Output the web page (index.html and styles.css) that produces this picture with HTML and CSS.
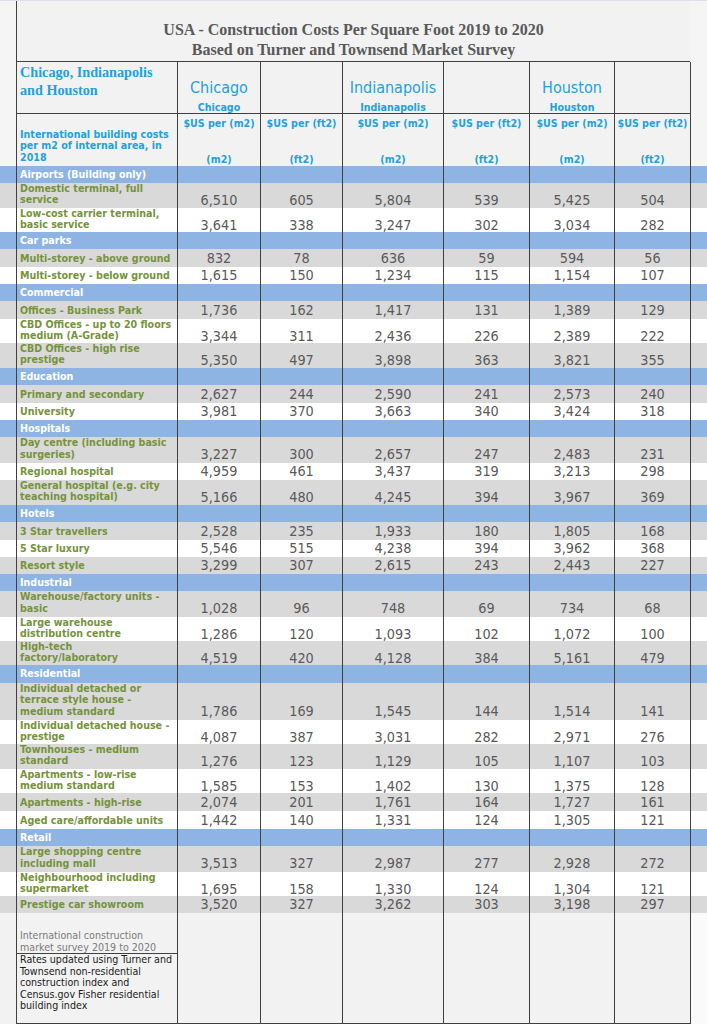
FILE: index.html
```
<!DOCTYPE html>
<html>
<head>
<meta charset="utf-8">
<link rel="stylesheet" href="styles.css">
</head>
<body>
<div class="sheet">
  <div class="title-row">
    <div class="m"></div>
    <div class="title">USA - Construction Costs Per Square Foot 2019 to 2020<br>Based on Turner and Townsend Market Survey</div>
    <div class="m edge"></div>
  </div>

  <div class="row head1">
    <div class="m"></div>
    <div class="c lbl-serif">Chicago, Indianapolis<br>and Houston</div>
    <div class="c city"><span class="big">Chicago</span><span class="small">Chicago</span></div>
    <div class="c"></div>
    <div class="c city"><span class="big">Indianapolis</span><span class="small">Indianapolis</span></div>
    <div class="c"></div>
    <div class="c city"><span class="big">Houston</span><span class="small">Houston</span></div>
    <div class="c"></div>
    <div class="m edge"></div>
  </div>

  <div class="row head2">
    <div class="m"></div>
    <div class="c intro">International building costs<br>per m2 of internal area, in<br>2018</div>
    <div class="c unit"><span>$US per (m2)</span><span>(m2)</span></div>
    <div class="c unit"><span>$US per (ft2)</span><span>(ft2)</span></div>
    <div class="c unit"><span>$US per (m2)</span><span>(m2)</span></div>
    <div class="c unit"><span>$US per (ft2)</span><span>(ft2)</span></div>
    <div class="c unit"><span>$US per (m2)</span><span>(m2)</span></div>
    <div class="c unit"><span>$US per (ft2)</span><span>(ft2)</span></div>
    <div class="m edge"></div>
  </div>

  <div class="row cat h17"><div class="m"></div><div class="c lbl">Airports (Building only)</div><div class="c"></div><div class="c"></div><div class="c"></div><div class="c"></div><div class="c"></div><div class="c"></div><div class="m edge"></div></div>
  <div class="row g h25"><div class="m"></div><div class="c lbl">Domestic terminal, full<br>service</div><div class="c n">6,510</div><div class="c n">605</div><div class="c n">5,804</div><div class="c n">539</div><div class="c n">5,425</div><div class="c n">504</div><div class="m edge"></div></div>
  <div class="row w h24"><div class="m"></div><div class="c lbl">Low-cost carrier terminal,<br>basic service</div><div class="c n">3,641</div><div class="c n">338</div><div class="c n">3,247</div><div class="c n">302</div><div class="c n">3,034</div><div class="c n">282</div><div class="m edge"></div></div>

  <div class="row cat h17"><div class="m"></div><div class="c lbl">Car parks</div><div class="c"></div><div class="c"></div><div class="c"></div><div class="c"></div><div class="c"></div><div class="c"></div><div class="m edge"></div></div>
  <div class="row g h18"><div class="m"></div><div class="c lbl">Multi-storey - above ground</div><div class="c n">832</div><div class="c n">78</div><div class="c n">636</div><div class="c n">59</div><div class="c n">594</div><div class="c n">56</div><div class="m edge"></div></div>
  <div class="row w h17"><div class="m"></div><div class="c lbl">Multi-storey - below ground</div><div class="c n">1,615</div><div class="c n">150</div><div class="c n">1,234</div><div class="c n">115</div><div class="c n">1,154</div><div class="c n">107</div><div class="m edge"></div></div>

  <div class="row cat h17"><div class="m"></div><div class="c lbl">Commercial</div><div class="c"></div><div class="c"></div><div class="c"></div><div class="c"></div><div class="c"></div><div class="c"></div><div class="m edge"></div></div>
  <div class="row g h18"><div class="m"></div><div class="c lbl">Offices - Business Park</div><div class="c n">1,736</div><div class="c n">162</div><div class="c n">1,417</div><div class="c n">131</div><div class="c n">1,389</div><div class="c n">129</div><div class="m edge"></div></div>
  <div class="row w h24"><div class="m"></div><div class="c lbl">CBD Offices - up to 20 floors<br>medium (A-Grade)</div><div class="c n">3,344</div><div class="c n">311</div><div class="c n">2,436</div><div class="c n">226</div><div class="c n">2,389</div><div class="c n">222</div><div class="m edge"></div></div>
  <div class="row g h25"><div class="m"></div><div class="c lbl">CBD Offices - high rise<br>prestige</div><div class="c n">5,350</div><div class="c n">497</div><div class="c n">3,898</div><div class="c n">363</div><div class="c n">3,821</div><div class="c n">355</div><div class="m edge"></div></div>

  <div class="row cat h17"><div class="m"></div><div class="c lbl">Education</div><div class="c"></div><div class="c"></div><div class="c"></div><div class="c"></div><div class="c"></div><div class="c"></div><div class="m edge"></div></div>
  <div class="row g h18"><div class="m"></div><div class="c lbl">Primary and secondary</div><div class="c n">2,627</div><div class="c n">244</div><div class="c n">2,590</div><div class="c n">241</div><div class="c n">2,573</div><div class="c n">240</div><div class="m edge"></div></div>
  <div class="row w h17"><div class="m"></div><div class="c lbl">University</div><div class="c n">3,981</div><div class="c n">370</div><div class="c n">3,663</div><div class="c n">340</div><div class="c n">3,424</div><div class="c n">318</div><div class="m edge"></div></div>

  <div class="row cat h17"><div class="m"></div><div class="c lbl">Hospitals</div><div class="c"></div><div class="c"></div><div class="c"></div><div class="c"></div><div class="c"></div><div class="c"></div><div class="m edge"></div></div>
  <div class="row g h26"><div class="m"></div><div class="c lbl">Day centre (including basic<br>surgeries)</div><div class="c n">3,227</div><div class="c n">300</div><div class="c n">2,657</div><div class="c n">247</div><div class="c n">2,483</div><div class="c n">231</div><div class="m edge"></div></div>
  <div class="row w h17"><div class="m"></div><div class="c lbl">Regional hospital</div><div class="c n">4,959</div><div class="c n">461</div><div class="c n">3,437</div><div class="c n">319</div><div class="c n">3,213</div><div class="c n">298</div><div class="m edge"></div></div>
  <div class="row g h25"><div class="m"></div><div class="c lbl">General hospital (e.g. city<br>teaching hospital)</div><div class="c n">5,166</div><div class="c n">480</div><div class="c n">4,245</div><div class="c n">394</div><div class="c n">3,967</div><div class="c n">369</div><div class="m edge"></div></div>

  <div class="row cat h17"><div class="m"></div><div class="c lbl">Hotels</div><div class="c"></div><div class="c"></div><div class="c"></div><div class="c"></div><div class="c"></div><div class="c"></div><div class="m edge"></div></div>
  <div class="row g h18"><div class="m"></div><div class="c lbl">3 Star travellers</div><div class="c n">2,528</div><div class="c n">235</div><div class="c n">1,933</div><div class="c n">180</div><div class="c n">1,805</div><div class="c n">168</div><div class="m edge"></div></div>
  <div class="row w h17"><div class="m"></div><div class="c lbl">5 Star luxury</div><div class="c n">5,546</div><div class="c n">515</div><div class="c n">4,238</div><div class="c n">394</div><div class="c n">3,962</div><div class="c n">368</div><div class="m edge"></div></div>
  <div class="row g h17"><div class="m"></div><div class="c lbl">Resort style</div><div class="c n">3,299</div><div class="c n">307</div><div class="c n">2,615</div><div class="c n">243</div><div class="c n">2,443</div><div class="c n">227</div><div class="m edge"></div></div>

  <div class="row cat h17"><div class="m"></div><div class="c lbl">Industrial</div><div class="c"></div><div class="c"></div><div class="c"></div><div class="c"></div><div class="c"></div><div class="c"></div><div class="m edge"></div></div>
  <div class="row g h26"><div class="m"></div><div class="c lbl">Warehouse/factory units -<br>basic</div><div class="c n">1,028</div><div class="c n">96</div><div class="c n">748</div><div class="c n">69</div><div class="c n">734</div><div class="c n">68</div><div class="m edge"></div></div>
  <div class="row w h24"><div class="m"></div><div class="c lbl">Large warehouse<br>distribution centre</div><div class="c n">1,286</div><div class="c n">120</div><div class="c n">1,093</div><div class="c n">102</div><div class="c n">1,072</div><div class="c n">100</div><div class="m edge"></div></div>
  <div class="row g h24"><div class="m"></div><div class="c lbl">High-tech<br>factory/laboratory</div><div class="c n">4,519</div><div class="c n">420</div><div class="c n">4,128</div><div class="c n">384</div><div class="c n">5,161</div><div class="c n">479</div><div class="m edge"></div></div>

  <div class="row cat h18"><div class="m"></div><div class="c lbl">Residential</div><div class="c"></div><div class="c"></div><div class="c"></div><div class="c"></div><div class="c"></div><div class="c"></div><div class="m edge"></div></div>
  <div class="row g h37"><div class="m"></div><div class="c lbl">Individual detached or<br>terrace style house -<br>medium standard</div><div class="c n">1,786</div><div class="c n">169</div><div class="c n">1,545</div><div class="c n">144</div><div class="c n">1,514</div><div class="c n">141</div><div class="m edge"></div></div>
  <div class="row w h24"><div class="m"></div><div class="c lbl">Individual detached house -<br>prestige</div><div class="c n">4,087</div><div class="c n">387</div><div class="c n">3,031</div><div class="c n">282</div><div class="c n">2,971</div><div class="c n">276</div><div class="m edge"></div></div>
  <div class="row g h25"><div class="m"></div><div class="c lbl">Townhouses - medium<br>standard</div><div class="c n">1,276</div><div class="c n">123</div><div class="c n">1,129</div><div class="c n">105</div><div class="c n">1,107</div><div class="c n">103</div><div class="m edge"></div></div>
  <div class="row w h24"><div class="m"></div><div class="c lbl">Apartments - low-rise<br>medium standard</div><div class="c n">1,585</div><div class="c n">153</div><div class="c n">1,402</div><div class="c n">130</div><div class="c n">1,375</div><div class="c n">128</div><div class="m edge"></div></div>
  <div class="row g h18"><div class="m"></div><div class="c lbl">Apartments - high-rise</div><div class="c n">2,074</div><div class="c n">201</div><div class="c n">1,761</div><div class="c n">164</div><div class="c n">1,727</div><div class="c n">161</div><div class="m edge"></div></div>
  <div class="row w h18"><div class="m"></div><div class="c lbl">Aged care/affordable units</div><div class="c n">1,442</div><div class="c n">140</div><div class="c n">1,331</div><div class="c n">124</div><div class="c n">1,305</div><div class="c n">121</div><div class="m edge"></div></div>

  <div class="row cat h17"><div class="m"></div><div class="c lbl">Retail</div><div class="c"></div><div class="c"></div><div class="c"></div><div class="c"></div><div class="c"></div><div class="c"></div><div class="m edge"></div></div>
  <div class="row g h26"><div class="m"></div><div class="c lbl">Large shopping centre<br>including mall</div><div class="c n">3,513</div><div class="c n">327</div><div class="c n">2,987</div><div class="c n">277</div><div class="c n">2,928</div><div class="c n">272</div><div class="m edge"></div></div>
  <div class="row w h24"><div class="m"></div><div class="c lbl">Neighbourhood including<br>supermarket</div><div class="c n">1,695</div><div class="c n">158</div><div class="c n">1,330</div><div class="c n">124</div><div class="c n">1,304</div><div class="c n">121</div><div class="m edge"></div></div>
  <div class="row g h17"><div class="m"></div><div class="c lbl">Prestige car showroom</div><div class="c n">3,520</div><div class="c n">327</div><div class="c n">3,262</div><div class="c n">303</div><div class="c n">3,198</div><div class="c n">297</div><div class="m edge"></div></div>

  <div class="row foot">
    <div class="m"></div>
    <div class="c notes">
      <div class="src">International construction<br>market survey 2019 to 2020</div>
      <div class="upd">Rates updated using Turner and<br>Townsend non-residential<br>construction index and<br>Census.gov Fisher residential<br>building index</div>
    </div>
    <div class="c"></div><div class="c"></div><div class="c"></div><div class="c"></div><div class="c"></div><div class="c"></div>
    <div class="m edge foot-edge"></div>
  </div>
</div>
</body>
</html>
```
FILE: styles.css
```
* { box-sizing: border-box; }
html, body { margin: 0; padding: 0; background: #ffffff; }
.sheet {
  width: 707px;
  font-family: "DejaVu Sans Condensed", "DejaVu Sans", sans-serif;
  font-stretch: condensed;
  border-top: 1px solid #dde2ea;
}
.title-row {
  display: grid;
  grid-template-columns: 16px 674px 17px;
  height: 61px;
  background: #f2f2f2;
}
.title {
  border-left: 1px solid #404040;
  border-bottom: 1px solid #404040;
  padding-top: 19px;
  text-align: center;
  font-family: "Liberation Serif", "DejaVu Serif", serif;
  font-weight: bold;
  font-size: 16px;
  line-height: 20px;
  color: #595959;
}
.m { background: transparent; }
.edge { border-left: 1px solid #404040; }
.title-row .m { background: #f5f5f5; }
.title-row .edge { border-left: none; }

.row {
  display: grid;
  grid-template-columns: 16px 161px 83px 82px 101px 86px 85px 76px 17px;
}
.row > .c { border-left: 1px solid #404040; }

.head1, .head2 { background: #f2f2f2; }
.head1 > .m, .head2 > .m { background: #f5f5f5; }
.head1 { height: 52px; }
.head1 > .c { border-bottom: 1px solid #404040; }
.head2 { height: 52px; }

.lbl-serif {
  font-family: "Liberation Serif", "DejaVu Serif", serif;
  font-weight: bold;
  font-size: 14.2px;
  line-height: 18px;
  color: #1ea1dc;
  padding: 1px 0 0 3px;
  white-space: nowrap;
}
.city {
  display: flex;
  flex-direction: column;
  justify-content: flex-end;
  align-items: center;
  color: #1ea1dc;
}
.city .big { font-size: 16px; line-height: 20px; margin-bottom: 3px; }
.city .small { font-size: 10.6px; line-height: 12px; font-weight: bold; }

.intro {
  display: flex;
  align-items: flex-end;
  padding: 0 0 3px 3px;
  font-size: 10.6px;
  font-weight: bold;
  line-height: 11.3px;
  color: #1ea1dc;
  white-space: nowrap;
}
.unit {
  display: flex;
  flex-direction: column;
  justify-content: space-between;
  align-items: center;
  padding: 3px 0 1px;
  font-size: 10.6px;
  font-weight: bold;
  line-height: 12px;
  color: #1ea1dc;
  white-space: nowrap;
}

.cat { background: #8db4e2; }
.g { background: #d9d9d9; }
.w { background: #ffffff; }
.h17 { height: 17px; }
.h18 { height: 18px; }
.h24 { height: 24px; }
.h25 { height: 25px; }
.h26 { height: 26px; }
.h37 { height: 37px; }

.lbl {
  display: flex;
  align-items: flex-end;
  padding: 0 0 3px 3px;
  font-size: 10.6px;
  font-weight: bold;
  line-height: 11.3px;
  color: #76933c;
  white-space: nowrap;
}
.cat .lbl {
  align-items: center;
  padding: 0 0 0 3px;
  color: #ffffff;
}
.n {
  display: flex;
  align-items: flex-end;
  justify-content: center;
  padding-bottom: 1px;
  font-size: 14.3px;
  line-height: 16px;
  color: #595959;
}

.foot { height: 111px; background: #f2f2f2; }
.foot > .c { border-bottom: 1px solid #404040; }
.foot > .m { background: #f2f2f2; }
.foot > .foot-edge { background: #fafafa; }
.notes { display: flex; flex-direction: column; }
.src {
  height: 41px;
  display: flex;
  align-items: flex-end;
  border-bottom: 1px solid #404040;
  padding-left: 3px;
  font-size: 10.6px;
  line-height: 11.5px;
  color: #7a7a7a;
  white-space: nowrap;
}
.upd {
  padding-left: 3px;
  font-size: 10.6px;
  line-height: 11.6px;
  color: #1a1a1a;
  white-space: nowrap;
}
```
